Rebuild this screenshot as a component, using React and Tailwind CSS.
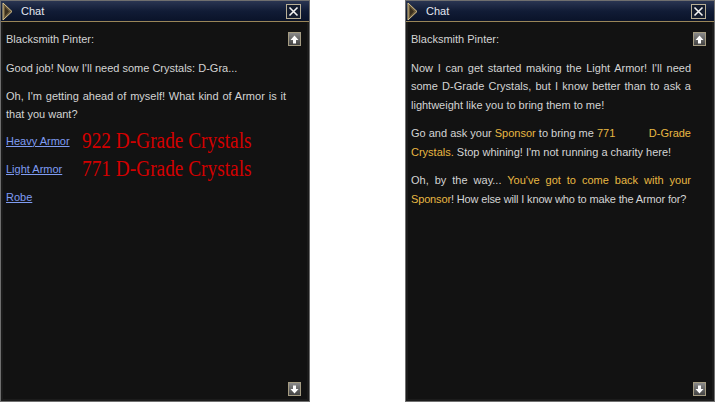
import React from 'react'

const font = { fontFamily: '"Liberation Sans", Arial, sans-serif' }

function TitleBar() {
  return (
    <div className="flex h-[21px] items-center border-b border-[#9a8658] bg-gradient-to-b from-[#2a3552] via-[#111c36] to-[#0a1329]">
      <svg width="11" height="19" viewBox="0 0 11 19" className="ml-[1px] shrink-0">
        <polygon points="1,1 10,9.5 1,18" fill="#6b5a3a" stroke="#d9c48e" strokeWidth="1" />
        <polygon points="3,5 7,9.5 3,14" fill="#3a2f1e" />
      </svg>
      <span className="ml-[8px] text-[11px] text-[#e4e8f0]">Chat</span>
      <div className="ml-auto mr-[8px] flex h-[15px] w-[15px] items-center justify-center border border-[#b9b097] bg-[#141c2e]">
        <svg width="11" height="11" viewBox="0 0 11 11">
          <path d="M1.5 1.5 L9.5 9.5 M9.5 1.5 L1.5 9.5" stroke="#f4f4f4" strokeWidth="1.6" />
        </svg>
      </div>
    </div>
  )
}

function ScrollBtn({ down }) {
  return (
    <div className="flex h-[14px] w-[13px] items-center justify-center border border-[#a59c82] bg-gradient-to-b from-[#8a8a8a] to-[#444444]">
      <svg width="9" height="9" viewBox="0 0 9 9" className={down ? 'rotate-180' : ''}>
        <path d="M4.5 0.5 L8.5 5 L6 5 L6 8.5 L3 8.5 L3 5 L0.5 5 Z" fill="#ffffff" />
      </svg>
    </div>
  )
}

function Window({ children }) {
  return (
    <div className="flex h-[402px] w-[310px] shrink-0 flex-col border border-[#6f6f6f] bg-[#0c0c0c]" style={font}>
      <TitleBar />
      <div className="flex flex-1 border-x-[2px] border-b-[2px] border-[#1b1b1b] bg-[#121212]">
        <div className="w-[283px] whitespace-nowrap pl-[3px] pt-[8px] text-[11px] leading-[18.5px] text-[#d4d4d4]">
          {children}
        </div>
        <div className="flex w-[21px] flex-col justify-between pb-[3px] pl-[2px] pt-[10px]">
          <ScrollBtn />
          <ScrollBtn down />
        </div>
      </div>
    </div>
  )
}

const J = ({ children }) => (
  <div className="w-[280px] whitespace-normal text-justify [text-align-last:justify]">{children}</div>
)
const Y = ({ children }) => <span className="text-[#e8b842]">{children}</span>

function Row({ link, red }) {
  return (
    <div className="flex h-[28px] items-center">
      <span className="w-[76px] text-[#7f9cf2] underline">{link}</span>
      {red && (
        <span
          className="inline-block origin-left scale-x-[0.84] whitespace-nowrap text-[23px] leading-[28px] text-[#d20000]"
          style={{ fontFamily: '"Liberation Serif", "Times New Roman", serif' }}
        >
          {red}
        </span>
      )}
    </div>
  )
}

export default function App() {
  return (
    <div className="flex h-[402px] w-[715px] justify-between bg-white">
      <Window>
        <div className="mb-[10px]">Blacksmith Pinter:</div>
        <div className="mb-[10px]">Good job! Now I'll need some Crystals: D-Gra...</div>
        <div className="leading-[18px]">
          <J>Oh, I'm getting ahead of myself! What kind of Armor is it</J>
          <div>that you want?</div>
        </div>
        <div className="mt-[4px]">
          <Row link="Heavy Armor" red="922 D-Grade Crystals" />
          <Row link="Light Armor" red="771 D-Grade Crystals" />
          <Row link="Robe" />
        </div>
      </Window>
      <Window>
        <div className="mb-[10px]">Blacksmith Pinter:</div>
        <div className="mb-[10px]">
          <J>Now I can get started making the Light Armor! I'll need</J>
          <J>some D-Grade Crystals, but I know better than to ask a</J>
          <div>lightweight like you to bring them to me!</div>
        </div>
        <div className="mb-[10px]">
          <div className="flex w-[280px] justify-between">
            <span>Go and ask your <Y>Sponsor</Y> to bring me <Y>771</Y></span>
            <Y>D-Grade</Y>
          </div>
          <div><Y>Crystals.</Y> Stop whining! I'm not running a charity here!</div>
        </div>
        <div>
          <J>Oh, by the way... <Y>You've got to come back with your</Y></J>
          <div className="tracking-[-0.15px]"><Y>Sponsor</Y>! How else will I know who to make the Armor for?</div>
        </div>
      </Window>
    </div>
  )
}
